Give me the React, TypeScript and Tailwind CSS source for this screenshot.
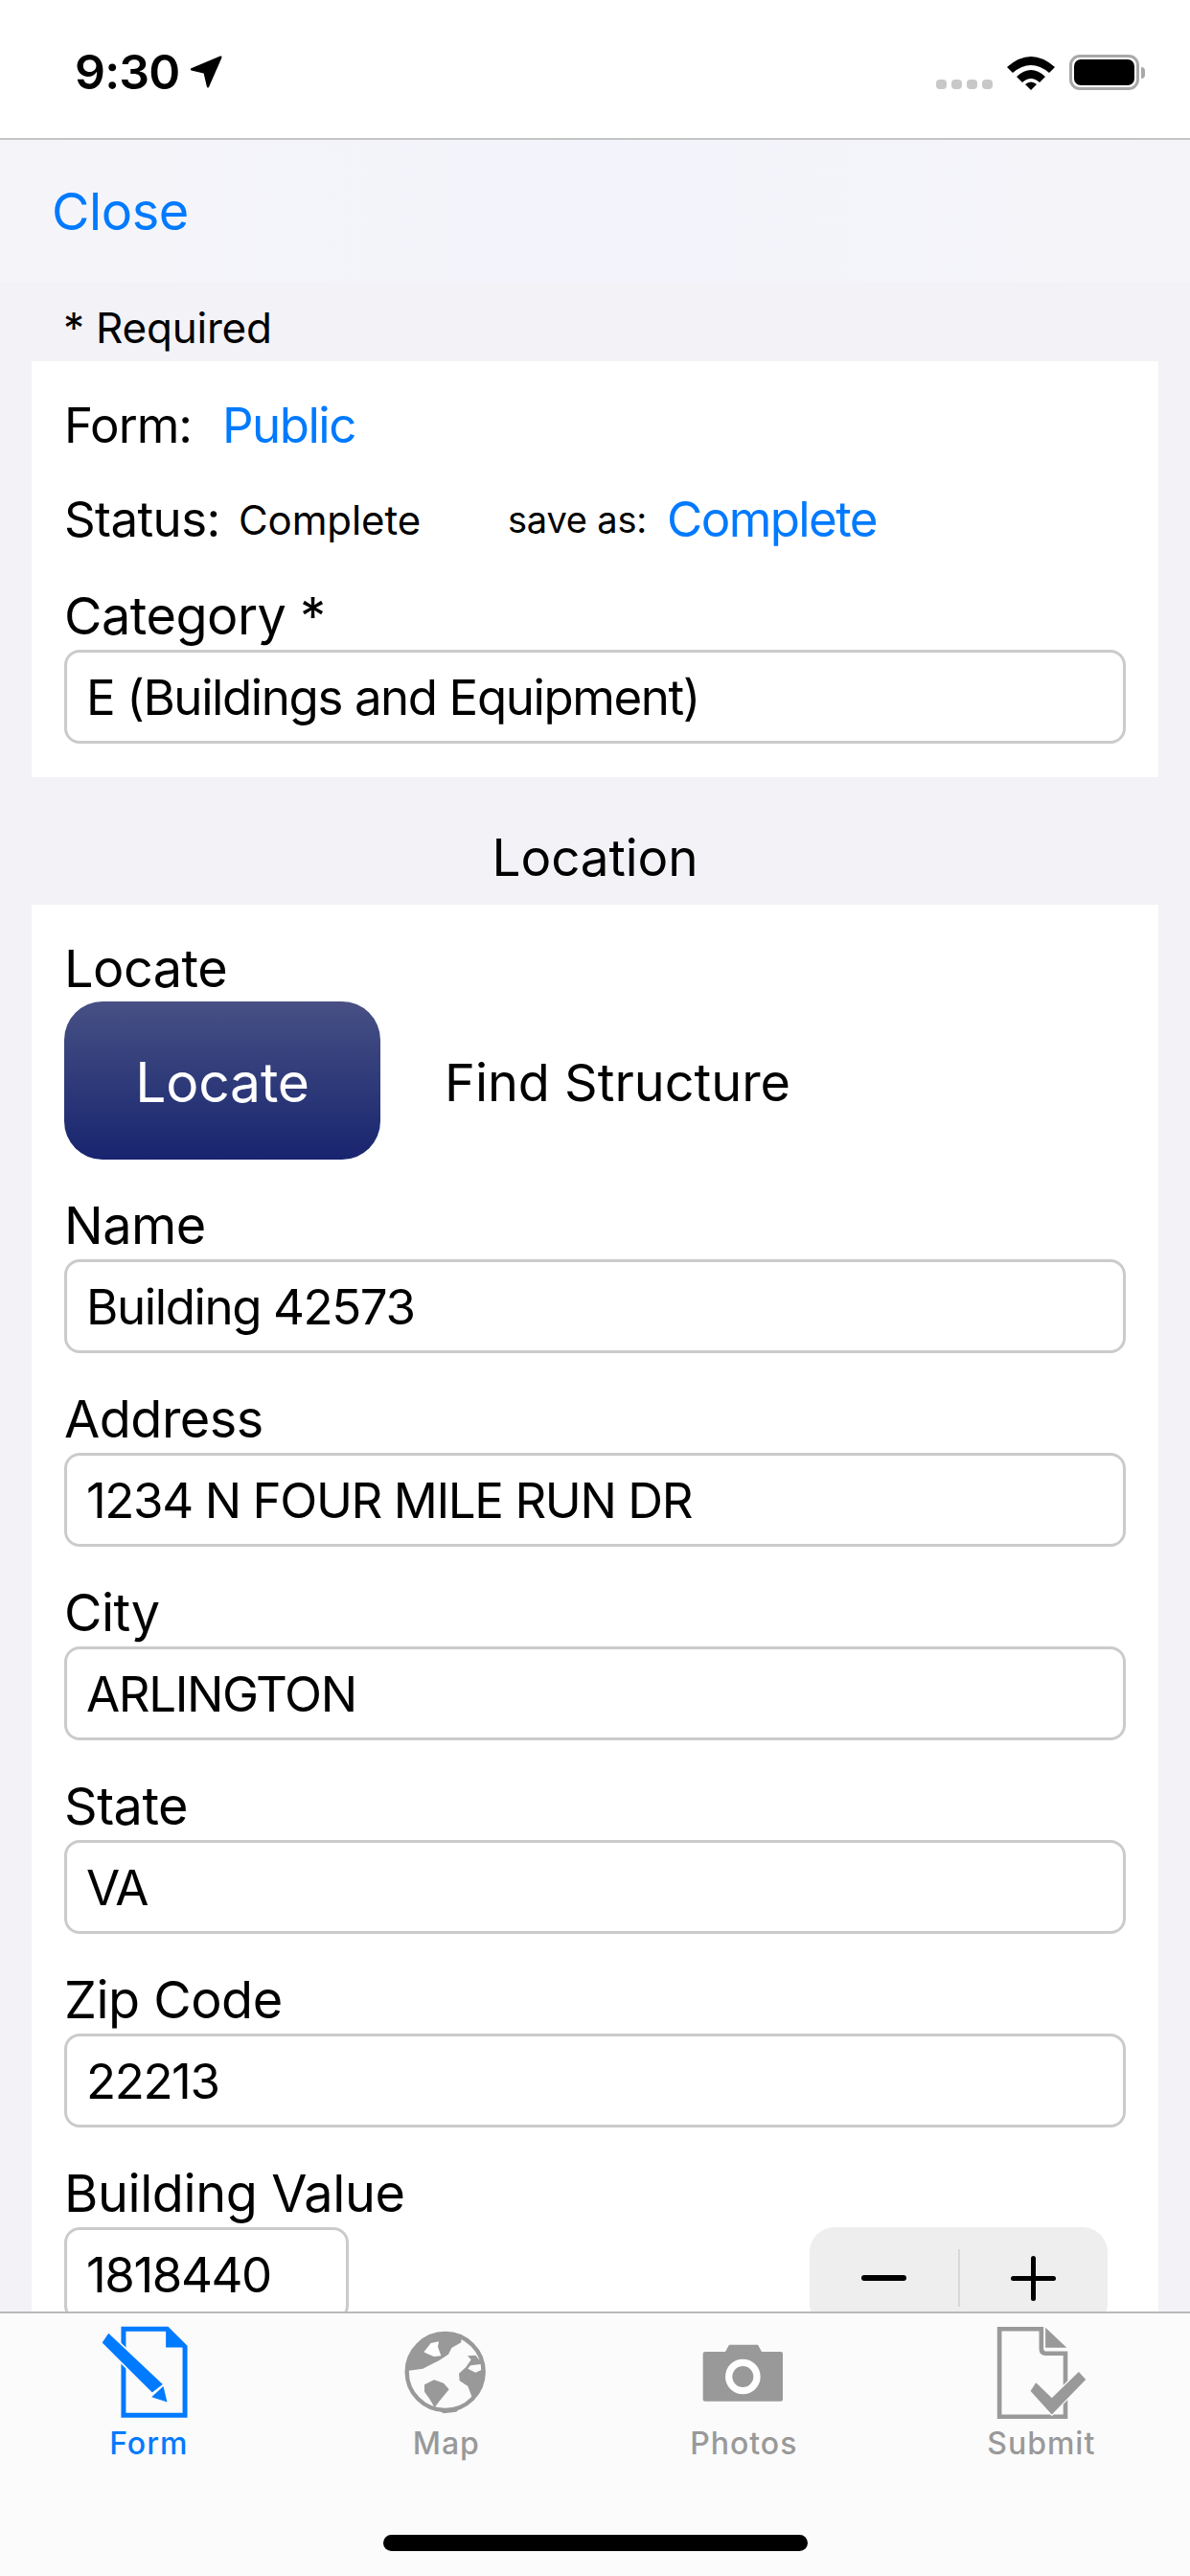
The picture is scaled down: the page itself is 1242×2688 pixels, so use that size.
import React from "react";

const font = { fontFamily: "Inter, 'Noto Sans', sans-serif" };

function Field({ label, value }: { label: string; value: string }) {
  return (
    <div className="flex flex-col">
      <div className="h-[104px] pt-[39px] text-[54px] leading-[60px] tracking-[-0.5px] text-black">{label}</div>
      <div className="flex h-[98px] w-full items-center rounded-[16px] border-[3px] border-[#cbcbcb] bg-white pl-[20px] pt-[2px] text-[51px] tracking-[-1.4px] text-black">
        {value}
      </div>
    </div>
  );
}

function FormIcon() {
  return (
    <svg viewBox="130 80 310 300" className="h-[100px] w-[103px]">
      <path d="M205 92H342L398 148V363H205Z" fill="none" stroke="#007aff" strokeWidth="15" />
      <path d="M338 88V150H402Z" fill="#007aff" />
      <path d="M158 106L328 266L295 292L138 135Z" fill="#007aff" stroke="#fbfbfb" strokeWidth="10" paintOrder="stroke" />
      <path d="M330 272L342 322L293 306Z" fill="#007aff" />
    </svg>
  );
}

function GlobeIcon() {
  return (
    <svg viewBox="0 -3 315 315" className="h-[105px] w-[105px]">
      <circle cx="155" cy="150" r="120" fill="none" stroke="#999" strokeWidth="13" />
      <path d="M38 140L45 100L80 60L130 35L170 28L205 40L205 58L175 75L165 95L135 115L105 130L85 140L40 146Z" fill="#999" />
      <path d="M88 88L110 60L135 55L132 72L142 100L120 102L100 94Z" fill="#fff" />
      <path d="M90 190L120 175L150 185L167 205L138 240L122 262L106 235L90 212Z" fill="#999" />
      <path d="M225 100L250 98L272 125L234 130L226 140L250 152L276 140L280 160L265 200L240 232L226 195L200 178L198 155L220 135L236 112Z" fill="#999" />
      <path d="M120 262L160 266L210 254L190 275L150 280Z" fill="#999" />
    </svg>
  );
}

function CameraIcon() {
  return (
    <svg viewBox="150 120 270 195" className="h-[65px] w-[90px]">
      <path d="M158 155Q158 150 165 150H228L240 128H330L342 150H402Q408 150 408 155V300Q408 305 402 305H165Q158 305 158 300Z" fill="#999" />
      <circle cx="283" cy="228" r="55" fill="#fff" />
      <circle cx="283" cy="228" r="33" fill="#999" />
    </svg>
  );
}

function SubmitIcon() {
  return (
    <svg viewBox="1075 80 295 305" className="h-[101px] w-[98px]">
      <path d="M1222 93H1090V369H1298V170H1235Q1222 170 1222 155Z" fill="none" stroke="#999" strokeWidth="14" />
      <path d="M1235 88L1302 152H1235Z" fill="#999" />
      <path d="M1205 262L1255 310L1340 228L1362 252L1255 362L1188 288Z" fill="#999" stroke="#fafafa" strokeWidth="8" paintOrder="stroke" />
    </svg>
  );
}

function Tab({ icon, label, active }: { icon: React.ReactNode; label: string; active?: boolean }) {
  return (
    <div className="flex flex-col items-center">
      <div className="flex h-[106px] items-center justify-center">{icon}</div>
      <div className={`pt-[3px] text-[32px] font-medium leading-[36px] tracking-[1px] ${active ? "text-[#007aff]" : "text-[#999999]"}`}>{label}</div>
    </div>
  );
}

export default function App() {
  return (
    <div className="flex h-[2688px] w-[1242px] flex-col overflow-hidden bg-[#f2f2f7]" style={font}>
      {/* Status bar */}
      <div className="relative flex h-[146px] shrink-0 items-start justify-between border-b-[2px] border-[#c4c4c6] bg-white pl-[78px] pr-[47px] pt-[48px]">
        <div className="flex items-center gap-[10px]">
          <span className="text-[50px] font-semibold leading-[54px] tracking-[-0.8px] text-black">9:30</span>
          <svg viewBox="415 55 105 105" className="h-[35px] w-[35px]">
            <path d="M512 60L421 98L462 108L472 152Z" fill="#000" stroke="#000" strokeWidth="7" strokeLinejoin="round" />
          </svg>
        </div>
        <div className="flex items-end gap-[15px] pt-[9px]">
          <div className="mb-[1px] flex gap-[5px]">
            <span className="h-[10px] w-[11px] rounded-[4px] bg-[#c8c8c8]" />
            <span className="h-[10px] w-[11px] rounded-[4px] bg-[#c8c8c8]" />
            <span className="h-[10px] w-[11px] rounded-[4px] bg-[#c8c8c8]" />
            <span className="h-[10px] w-[11px] rounded-[4px] bg-[#c8c8c8]" />
          </div>
          <svg viewBox="0 0 50 36" className="h-[36px] w-[50px]">
            <path d="M0 12Q25 -10 50 12L44 18Q25 2 6 18Z" fill="#000" />
            <path d="M10 22Q25 8 40 22L34 28Q25 20 16 28Z" fill="#000" />
            <path d="M19 30Q25 25 31 30L25 36Z" fill="#000" />
          </svg>
          <div className="flex items-center">
            <div className="flex h-[37px] w-[73px] items-center justify-center rounded-[11px] border-[3px] border-[#a8a8a8] p-[2px]">
              <div className="h-full w-full rounded-[7px] bg-black" />
            </div>
            <div className="ml-[2px] h-[12px] w-[4px] rounded-r-full bg-[#a8a8a8]" />
          </div>
        </div>
      </div>

      {/* Nav bar */}
      <div className="flex h-[149px] shrink-0 items-center bg-gradient-to-r from-[#f5f5f9] via-[#f3f4fb] to-[#f5f5f9] pl-[54px]">
        <span className="text-[54px] tracking-[-0.4px] text-[#007aff]">Close</span>
      </div>

      {/* Form */}
      <div className="flex-1 overflow-hidden px-[33px]">
        <div className="flex h-[82px] items-center pl-[33px] pt-[12px] text-[44px] tracking-[-0.2px] text-black">* Required</div>

        <div className="bg-white px-[34px] pb-[35px]">
          <div className="flex h-[98px] items-center pt-[36px] text-[51px] text-black">
            <span className="w-[165px] tracking-[-1px]">Form:</span>
            <span className="tracking-[-1.5px] text-[#007aff]">Public</span>
          </div>
          <div className="flex h-[98px] items-center pt-[36px] text-[51px] text-black">
            <span className="w-[182px] tracking-[-0.6px]">Status:</span>
            <span className="w-[281px] text-[42px] tracking-[-0.1px]">Complete</span>
            <span className="w-[166px] text-[38px] tracking-[-0.2px]">save as:</span>
            <span className="tracking-[-1.6px] text-[#007aff]">Complete</span>
          </div>
          <div className="mt-[1px]">
            <Field label="Category *" value="E (Buildings and Equipment)" />
          </div>
        </div>

        <div className="flex h-[133px] items-center justify-center pt-[36px] text-[53px] tracking-[-0.1px] text-black">Location</div>

        <div className="bg-white px-[34px] pb-[60px]">
          <div className="h-[101px] pt-[37px] text-[54px] leading-[60px] tracking-[-0.5px] text-black">Locate</div>
          <div className="flex items-center">
            <div className="flex h-[165px] w-[330px] items-center justify-center rounded-[40px] bg-gradient-to-b from-[#485084] to-[#18246e] pt-[4px] text-[57px] tracking-[-0.2px] text-white">
              Locate
            </div>
            <span className="ml-[67px] pt-[3px] text-[54px] text-black">Find Structure</span>
          </div>
          <Field label="Name" value="Building 42573" />
          <Field label="Address" value="1234 N FOUR MILE RUN DR" />
          <Field label="City" value="ARLINGTON" />
          <Field label="State" value="VA" />
          <Field label="Zip Code" value="22213" />
          <div className="h-[104px] pt-[39px] text-[54px] leading-[60px] tracking-[-0.4px] text-black">Building Value</div>
          <div className="flex items-start justify-between pr-[19px]">
            <div className="flex h-[98px] w-[297px] items-center rounded-[16px] border-[3px] border-[#cbcbcb] bg-white pl-[20px] pt-[2px] text-[51px] tracking-[-1.4px] text-black">
              1818440
            </div>
            <div className="flex h-[106px] w-[311px] items-center rounded-[26px] bg-[#eeeeef]">
              <div className="flex h-[60px] flex-1 items-center justify-center border-r-[2px] border-[#d8d8d8]">
                <div className="h-[6px] w-[47px] rounded-full bg-black" />
              </div>
              <div className="relative flex h-[60px] flex-1 items-center justify-center">
                <div className="h-[5px] w-[47px] rounded-full bg-black" />
                <div className="absolute h-[47px] w-[5px] rounded-full bg-black" />
              </div>
            </div>
          </div>
        </div>
      </div>

      {/* Tab bar */}
      <div className="flex h-[276px] shrink-0 flex-col border-t-[2px] border-[#b9b9bb] bg-[#fbfbfb]">
        <div className="grid grid-cols-4 pt-[9px]">
          <Tab icon={<FormIcon />} label="Form" active />
          <Tab icon={<GlobeIcon />} label="Map" />
          <Tab icon={<CameraIcon />} label="Photos" />
          <Tab icon={<SubmitIcon />} label="Submit" />
        </div>
        <div className="mt-auto flex justify-center pb-[26px]">
          <div className="h-[17px] w-[443px] rounded-full bg-black" />
        </div>
      </div>
    </div>
  );
}
